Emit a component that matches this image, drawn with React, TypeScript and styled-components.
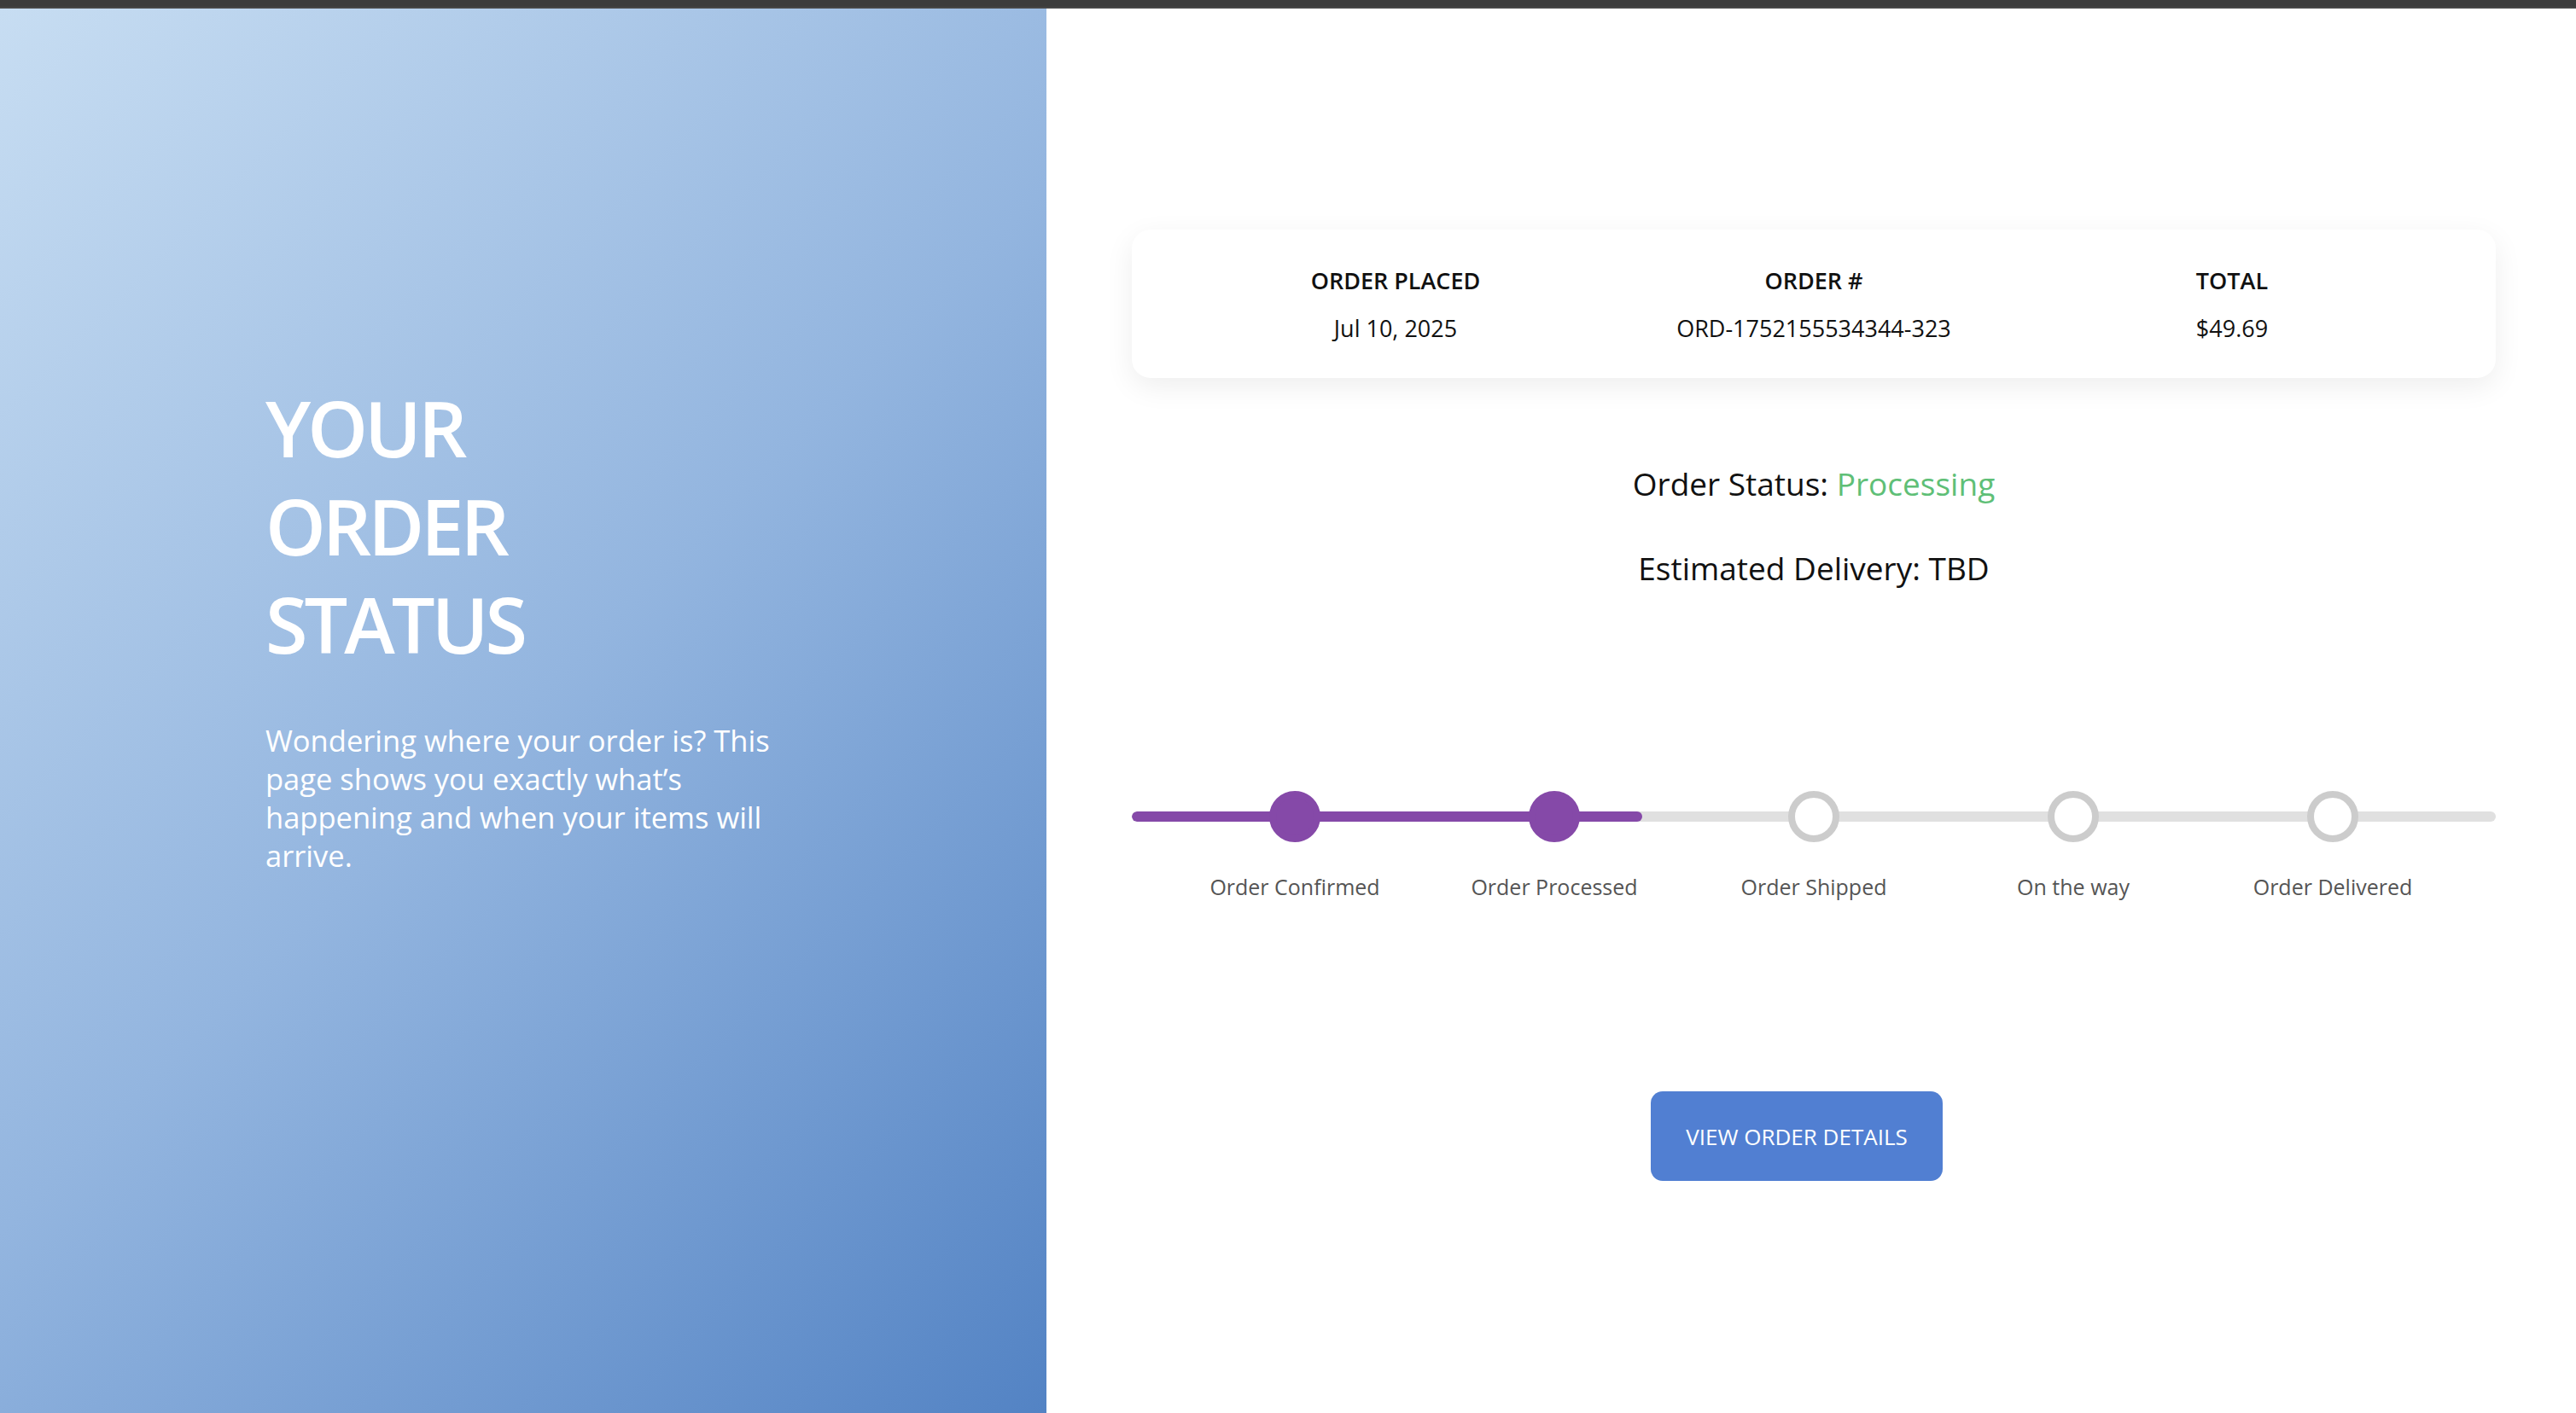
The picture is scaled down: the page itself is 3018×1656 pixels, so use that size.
import styled, { createGlobalStyle } from "styled-components";

const GlobalStyle = createGlobalStyle`
  html, body {
    margin: 0;
    padding: 0;
    background: #ffffff;
  }
  body {
    font-family: "Open Sans", "Noto Sans", sans-serif;
  }
  * {
    box-sizing: border-box;
  }
`;

const Page = styled.div`
  width: 3018px;
  height: 1656px;
  display: flex;
  flex-direction: column;
  overflow: hidden;
`;

const TopBar = styled.div`
  height: 10px;
  background: #3c3c3c;
  border-bottom: 2px solid #474747;
`;

const Main = styled.div`
  flex: 1;
  display: flex;
  flex-direction: row;
`;

const Hero = styled.div`
  width: 1226px;
  background: linear-gradient(135deg, #c7ddf2 0%, #93b5df 50%, #5383c4 100%);
  padding: 434px 0 0 311px;
  display: flex;
  flex-direction: column;
  color: #ffffff;
`;

const HeroTitle = styled.h1`
  margin: 0;
  font-size: 90px;
  font-weight: 600;
  line-height: 115px;
  letter-spacing: -4px;
  text-transform: uppercase;
  width: 400px;
`;

const HeroText = styled.p`
  margin: 56px 0 0;
  font-size: 34.5px;
  line-height: 45px;
  width: 620px;
`;

const Content = styled.div`
  flex: 1;
  background: #ffffff;
  padding: 259px 94px 0 100px;
  display: flex;
  flex-direction: column;
`;

const SummaryCard = styled.div`
  display: grid;
  grid-template-columns: repeat(3, 1fr);
  padding: 40px 64px 38px;
  border-radius: 22px;
  background: #ffffff;
  box-shadow: 0 10px 34px rgba(0, 0, 0, 0.07);
`;

const SummaryItem = styled.div`
  display: flex;
  flex-direction: column;
  align-items: center;
  gap: 16px;
`;

const SummaryLabel = styled.span`
  font-size: 27px;
  line-height: 40px;
  font-weight: 600;
  color: #111111;
  text-transform: uppercase;
`;

const SummaryValue = styled.span`
  font-size: 27px;
  line-height: 40px;
  color: #111111;
`;

const StatusLine = styled.div<{ $gap?: number }>`
  margin-top: ${(p) => p.$gap ?? 0}px;
  text-align: center;
  font-size: 37px;
  line-height: 52px;
  color: #111111;
`;

const StatusValue = styled.span`
  color: #5fbf77;
`;

const Stepper = styled.div`
  position: relative;
  margin-top: 235px;
  display: grid;
  grid-template-columns: repeat(5, 1fr);
  padding: 0 39px;
`;

const Track = styled.div`
  position: absolute;
  left: 0;
  right: 0;
  top: 24px;
  height: 12px;
  border-radius: 6px;
  background: #e0e0e0;
  overflow: hidden;
`;

const TrackFill = styled.div`
  height: 100%;
  border-radius: 6px;
  background: #8549a8;
`;

const Step = styled.div`
  position: relative;
  display: flex;
  flex-direction: column;
  align-items: center;
  gap: 35px;
`;

const StepDot = styled.div<{ $done: boolean }>`
  width: 60px;
  height: 60px;
  border-radius: 50%;
  background: ${(p) => (p.$done ? "#8549a8" : "#ffffff")};
  border: 8px solid ${(p) => (p.$done ? "#8549a8" : "#cccccc")};
`;

const StepLabel = styled.span`
  font-size: 25px;
  line-height: 35px;
  color: #555555;
  white-space: nowrap;
`;

const DetailsButton = styled.button`
  align-self: center;
  margin: 222px 40px 0 0;
  height: 105px;
  padding: 0 41px;
  border: none;
  border-radius: 14px;
  background: #517fd2;
  color: #ffffff;
  font-family: "Open Sans", "Noto Sans", sans-serif;
  font-size: 26px;
  font-weight: 500;
  text-transform: uppercase;
  cursor: pointer;
`;

const steps = [
  "Order Confirmed",
  "Order Processed",
  "Order Shipped",
  "On the way",
  "Order Delivered",
];

const completed = 2;
const progress = 37.4;

export default function App() {
  return (
    <>
      <GlobalStyle />
      <Page>
        <TopBar />
        <Main>
          <Hero>
            <HeroTitle>Your Order Status</HeroTitle>
            <HeroText>
              Wondering where your order is? This page shows you exactly
              what’s happening and when your items will arrive.
            </HeroText>
          </Hero>
          <Content>
            <SummaryCard>
              <SummaryItem>
                <SummaryLabel>Order Placed</SummaryLabel>
                <SummaryValue>Jul 10, 2025</SummaryValue>
              </SummaryItem>
              <SummaryItem>
                <SummaryLabel>Order #</SummaryLabel>
                <SummaryValue>ORD-1752155534344-323</SummaryValue>
              </SummaryItem>
              <SummaryItem>
                <SummaryLabel>Total</SummaryLabel>
                <SummaryValue>$49.69</SummaryValue>
              </SummaryItem>
            </SummaryCard>
            <StatusLine $gap={98}>
              Order Status: <StatusValue>Processing</StatusValue>
            </StatusLine>
            <StatusLine $gap={47}>Estimated Delivery: TBD</StatusLine>
            <Stepper>
              <Track>
                <TrackFill style={{ width: `${progress}%` }} />
              </Track>
              {steps.map((label, i) => (
                <Step key={label}>
                  <StepDot $done={i < completed} />
                  <StepLabel>{label}</StepLabel>
                </Step>
              ))}
            </Stepper>
            <DetailsButton>View Order Details</DetailsButton>
          </Content>
        </Main>
      </Page>
    </>
  );
}
